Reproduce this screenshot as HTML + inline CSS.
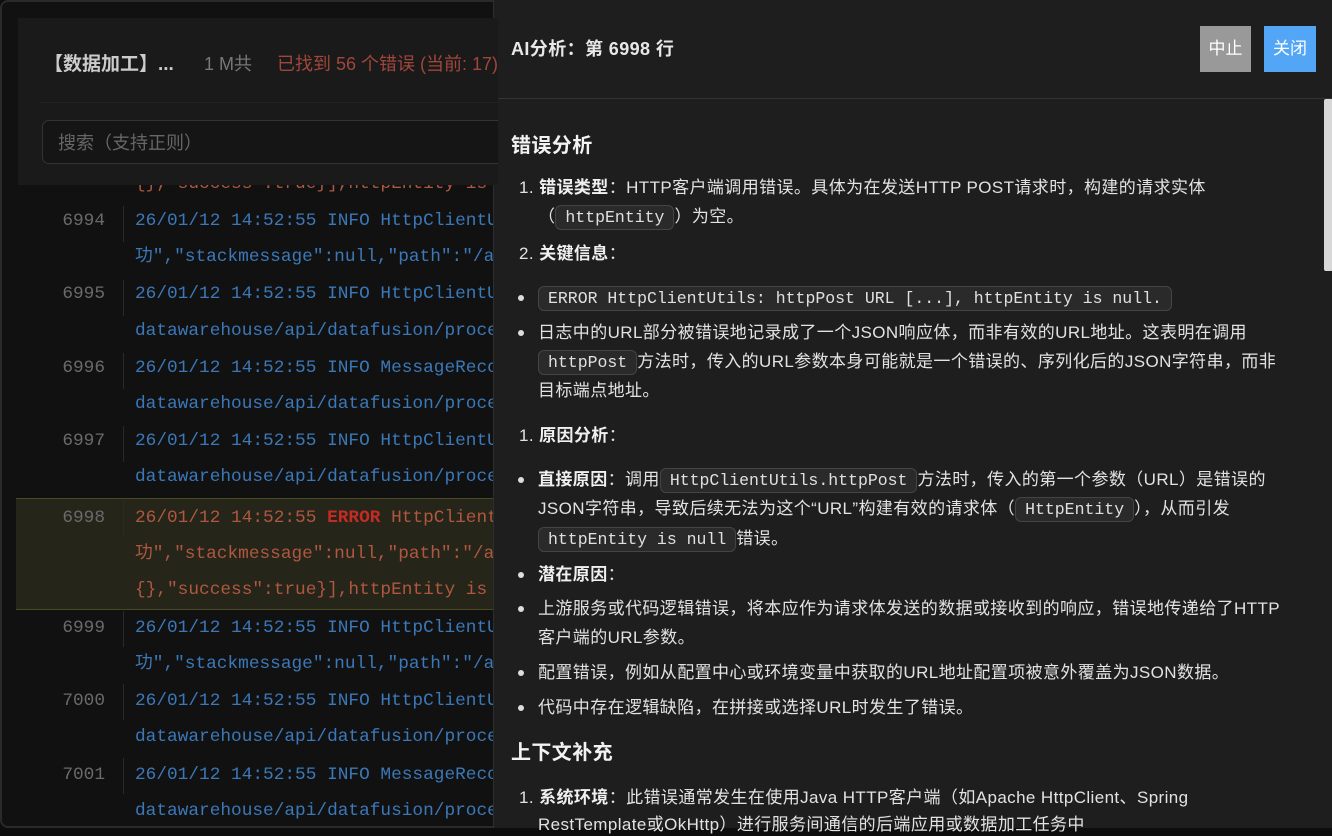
<!DOCTYPE html>
<html><head><meta charset="utf-8"><style>
*{margin:0;padding:0;box-sizing:border-box}
body{width:1332px;height:828px;overflow:hidden;background:#0d0d0d;position:relative;font-family:"Liberation Sans","Noto Sans CJK SC",sans-serif}
.left{position:absolute;left:0;top:0;width:500px;height:828px;background:#111;border:2px solid #2a2a2a;border-radius:8px;overflow:hidden}
.mono{font-family:"Liberation Mono","Noto Sans CJK SC",monospace;font-size:17.8px;white-space:nowrap;position:absolute;line-height:24px}
.ln{position:absolute;left:38px;width:65px;text-align:right;color:#6a6a6a}
.sep{position:absolute;left:121px;width:1px;background:#2a2a2a}
.b{color:#3b78b8}.r{color:#b0573f}
.hdr{position:absolute;left:16px;top:16px;width:480px;height:167px;background:#1a1a1a;z-index:2}
.right{position:absolute;left:493px;top:0;width:839px;height:828px;background:#1e1e1e;border-left:1px solid #2e2e2e}
.t{position:absolute;white-space:nowrap;color:#e2e2e2;font-size:17px;letter-spacing:0.4px;line-height:22px;font-family:"Liberation Sans","Noto Sans CJK SC",sans-serif}
.t b{color:#f0f0f0}
code{font-family:"Liberation Mono",monospace;font-size:16.5px;letter-spacing:0;background:#2a2a2a;border:1px solid #444;border-radius:6px;padding:2px 9px;color:#e0e0e0}
.h{font-size:20px;font-weight:bold;color:#f2f2f2}
.dot{position:absolute;left:518px;width:6px;height:6px;border-radius:3px;background:#ddd}
</style></head><body>
<div class="left">
<div class="hdr">
 <div style="position:absolute;left:26px;top:31px;font-size:19px;font-weight:bold;color:#ccc;white-space:nowrap">【数据加工】...</div>
 <div style="position:absolute;left:186px;top:32px;font-size:18px;color:#777;white-space:nowrap">1 M共</div>
 <div style="position:absolute;left:259px;top:32px;font-size:18px;color:#a0463a;white-space:nowrap">已找到 56 个错误 (当前: 17)</div>
 <div style="position:absolute;left:22px;top:84px;width:470px;height:1px;background:#222"></div>
 <div style="position:absolute;left:24px;top:102px;width:470px;height:44px;border:1px solid #333;border-radius:7px;background:#151515"></div>
 <div style="position:absolute;left:40px;top:111px;font-size:18px;color:#666;white-space:nowrap">搜索（支持正则）</div>
</div>
<div style="position:absolute;left:14px;top:496px;width:490px;height:112px;background:#25251a;border-top:1px solid #4a4a22;border-bottom:1px solid #4a4a22"></div>
<div class="mono r" style="left:133px;top:170px">{},"success":true}],httpEntity is</div>
<div class="sep" style="top:204px;height:36px"></div><div class="mono ln" style="top:207px">6994</div>
<div class="mono b" style="left:133px;top:207px">26/01/12 14:52:55 INFO HttpClientU</div>
<div class="mono b" style="left:133px;top:243px">功","stackmessage":null,"path":"/a</div>
<div class="sep" style="top:278px;height:36px"></div><div class="mono ln" style="top:280px">6995</div>
<div class="mono b" style="left:133px;top:280px">26/01/12 14:52:55 INFO HttpClientU</div>
<div class="mono b" style="left:133px;top:317px">datawarehouse/api/datafusion/proce</div>
<div class="sep" style="top:351px;height:36px"></div><div class="mono ln" style="top:354px">6996</div>
<div class="mono b" style="left:133px;top:354px">26/01/12 14:52:55 INFO MessageReco</div>
<div class="mono b" style="left:133px;top:390px">datawarehouse/api/datafusion/proce</div>
<div class="sep" style="top:424px;height:36px"></div><div class="mono ln" style="top:427px">6997</div>
<div class="mono b" style="left:133px;top:427px">26/01/12 14:52:55 INFO HttpClientU</div>
<div class="mono b" style="left:133px;top:463px">datawarehouse/api/datafusion/proce</div>
<div class="sep" style="top:498px;height:36px"></div><div class="mono ln" style="top:504px">6998</div>
<div class="mono r" style="left:133px;top:504px">26/01/12 14:52:55 <b style="color:#c42b22">ERROR</b> HttpClient</div>
<div class="mono r" style="left:133px;top:540px">功","stackmessage":null,"path":"/a</div>
<div class="mono r" style="left:133px;top:576px">{},"success":true}],httpEntity is</div>
<div class="sep" style="top:609px;height:36px"></div><div class="mono ln" style="top:614px">6999</div>
<div class="mono b" style="left:133px;top:614px">26/01/12 14:52:55 INFO HttpClientU</div>
<div class="mono b" style="left:133px;top:650px">功","stackmessage":null,"path":"/a</div>
<div class="sep" style="top:682px;height:36px"></div><div class="mono ln" style="top:687px">7000</div>
<div class="mono b" style="left:133px;top:687px">26/01/12 14:52:55 INFO HttpClientU</div>
<div class="mono b" style="left:133px;top:723px">datawarehouse/api/datafusion/proce</div>
<div class="sep" style="top:756px;height:36px"></div><div class="mono ln" style="top:761px">7001</div>
<div class="mono b" style="left:133px;top:761px">26/01/12 14:52:55 INFO MessageReco</div>
<div class="mono b" style="left:133px;top:797px">datawarehouse/api/datafusion/proce</div>
</div>

<div class="right">
 <div style="position:absolute;left:0;top:98px;width:839px;height:1px;background:#333"></div>
 <div style="position:absolute;left:706px;top:26px;width:51px;height:46px;background:#999;color:#fff;font-size:17px;line-height:46px;text-align:center">中止</div>
 <div style="position:absolute;left:770px;top:26px;width:52px;height:46px;background:#52a6f5;color:#fff;font-size:17px;line-height:46px;text-align:center">关闭</div>
 <div style="position:absolute;left:830px;top:99px;width:9px;height:172px;background:#d8d8d8;border-radius:2px"></div>
</div>
<div class="t" style="left:511px;top:38px;font-size:18px;font-weight:bold;color:#e8e8e8">AI分析：第 6998 行</div>
<div class="t h" style="left:511px;top:135px">错误分析</div>
<div class="t" style="left:519px;top:177px">1. <b>错误类型</b>：HTTP客户端调用错误。具体为在发送HTTP POST请求时，构建的请求实体</div>
<div class="t" style="left:538px;top:206px">（<code>httpEntity</code>）为空。</div>
<div class="t" style="left:519px;top:243px">2. <b>关键信息</b>：</div>
<div class="dot" style="top:295px"></div><div class="t" style="left:538px;top:287px"><code>ERROR HttpClientUtils: httpPost URL [...], httpEntity is null.</code></div>
<div class="dot" style="top:330px"></div><div class="t" style="left:538px;top:322px">日志中的URL部分被错误地记录成了一个JSON响应体，而非有效的URL地址。这表明在调用</div>
<div class="t" style="left:538px;top:351px"><code>httpPost</code>方法时，传入的URL参数本身可能就是一个错误的、序列化后的JSON字符串，而非</div>
<div class="t" style="left:538px;top:380px">目标端点地址。</div>
<div class="t" style="left:519px;top:425px">1. <b>原因分析</b>：</div>
<div class="dot" style="top:477px"></div><div class="t" style="left:538px;top:469px"><b>直接原因</b>：调用<code>HttpClientUtils.httpPost</code>方法时，传入的第一个参数（URL）是错误的</div>
<div class="t" style="left:538px;top:498px">JSON字符串，导致后续无法为这个“URL”构建有效的请求体（<code>HttpEntity</code>），从而引发</div>
<div class="t" style="left:538px;top:528px"><code>httpEntity is null</code>错误。</div>
<div class="dot" style="top:572px"></div><div class="t" style="left:538px;top:564px"><b>潜在原因</b>：</div>
<div class="dot" style="top:606px"></div><div class="t" style="left:538px;top:598px">上游服务或代码逻辑错误，将本应作为请求体发送的数据或接收到的响应，错误地传递给了HTTP</div>
<div class="t" style="left:538px;top:627px">客户端的URL参数。</div>
<div class="dot" style="top:670px"></div><div class="t" style="left:538px;top:662px">配置错误，例如从配置中心或环境变量中获取的URL地址配置项被意外覆盖为JSON数据。</div>
<div class="dot" style="top:705px"></div><div class="t" style="left:538px;top:697px">代码中存在逻辑缺陷，在拼接或选择URL时发生了错误。</div>
<div class="t h" style="left:511px;top:742px">上下文补充</div>
<div class="t" style="left:519px;top:787px">1. <b>系统环境</b>：此错误通常发生在使用Java HTTP客户端（如Apache HttpClient、Spring</div>
<div class="t" style="left:538px;top:814px">RestTemplate或OkHttp）进行服务间通信的后端应用或数据加工任务中</div>
</body></html>
